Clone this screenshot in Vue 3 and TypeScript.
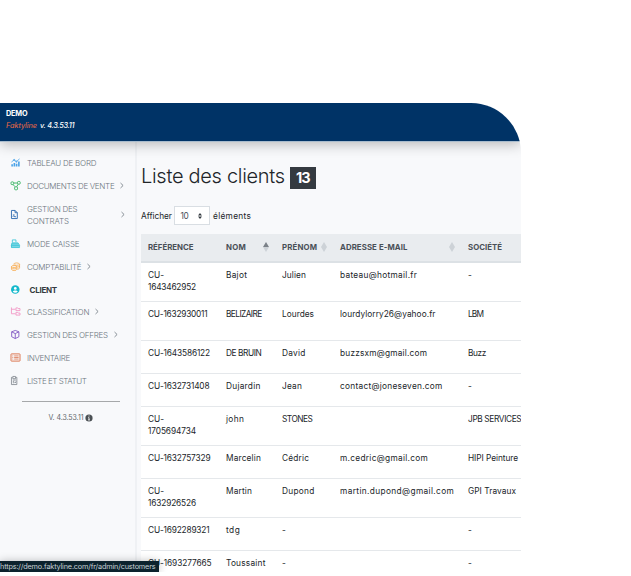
<script setup lang="ts">
interface MenuItem {
  icon: string
  color: string
  lines: [string, number][]
  arrow?: boolean
  wide?: boolean
  active?: boolean
}
type Cell = [string, number]
interface Row {
  height: number
  ref: Cell[]
  cells: Cell[]
}

// Adjusts tracking so that a label takes the given width in pixels.
const vFit = {
  mounted(el: HTMLElement, binding: { value: number }) {
    const n = (el.textContent ?? '').length
    if (n < 2 || !binding.value) return
    const natural = el.getBoundingClientRect().width
    el.style.letterSpacing = `${(binding.value - natural) / (n - 0.5)}px`
  },
}

const menu: MenuItem[] = [
  { icon: 'chart', color: '#4ba3e8', lines: [['TABLEAU DE BORD', 69.5]] },
  { icon: 'nodes', color: '#43b86a', lines: [['DOCUMENTS DE VENTE', 87.5]], arrow: true },
  { icon: 'file', color: '#3b73b5', lines: [['GESTION DES', 50.5], ['CONTRATS', 42]], arrow: true, wide: true },
  { icon: 'register', color: '#35c3d6', lines: [['MODE CAISSE', 52.5]] },
  { icon: 'coins', color: '#f7a94b', lines: [['COMPTABILITÉ', 54.5]], arrow: true },
  { icon: 'user', color: '#13b8cb', lines: [['CLIENT', 27.5]], active: true },
  { icon: 'tree', color: '#f29ac6', lines: [['CLASSIFICATION', 62.5]], arrow: true },
  { icon: 'box', color: '#8258c4', lines: [['GESTION DES OFFRES', 81]], arrow: true },
  { icon: 'list', color: '#dc7550', lines: [['INVENTAIRE', 43]] },
  { icon: 'clip', color: '#7d858c', lines: [['LISTE ET STATUT', 59.5]] },
]

const heads: { label: string; width: number; sort?: string }[] = [
  { label: 'RÉFÉRENCE', width: 45.5 },
  { label: 'NOM', width: 20, sort: 'asc' },
  { label: 'PRÉNOM', width: 35, sort: 'none' },
  { label: 'ADRESSE E-MAIL', width: 67.5, sort: 'none' },
  { label: 'SOCIÉTÉ', width: 34 },
]

const rows: Row[] = [
  { height: 39, ref: [['CU-', 16], ['1643462952', 48]], cells: [['Bajot', 21], ['Julien', 24], ['bateau@hotmail.fr', 77], ['-', 4]] },
  { height: 39, ref: [['CU-1632930011', 59.5]], cells: [['BELIZAIRE', 36], ['Lourdes', 32], ['lourdylorry26@yahoo.fr', 95.5], ['LBM', 15.5]] },
  { height: 33, ref: [['CU-1643586122', 62]], cells: [['DE BRUIN', 35.5], ['David', 23.5], ['buzzsxm@gmail.com', 87], ['Buzz', 18]] },
  { height: 33, ref: [['CU-1632731408', 61.5]], cells: [['Dujardin', 34.5], ['Jean', 20], ['contact@joneseven.com', 102.5], ['-', 4]] },
  { height: 39, ref: [['CU-', 16], ['1705694734', 48]], cells: [['john', 18], ['STONES', 30.5], ['', 0], ['JPB SERVICES', 53.5]] },
  { height: 33, ref: [['CU-1632757329', 62.5]], cells: [['Marcelin', 35], ['Cédric', 27], ['m.cedric@gmail.com', 88], ['HIPI Peinture', 50]] },
  { height: 39, ref: [['CU-', 16], ['1632926526', 48]], cells: [['Martin', 26], ['Dupond', 32.5], ['martin.dupond@gmail.com', 114], ['GPI Travaux', 48]] },
  { height: 33, ref: [['CU-1692289321', 61.5]], cells: [['tdg', 14], ['-', 4], ['', 0], ['-', 4]] },
  { height: 33, ref: [['CU-1693277665', 63.5]], cells: [['Toussaint', 39.5], ['-', 4], ['', 0], ['-', 4]] },
]
</script>

<template>
  <div class="window">
    <header class="topbar">
      <strong><span v-fit="21.5">DEMO</span></strong>
      <em><span v-fit="31" class="brand">Faktyline</span><span v-fit="34.5" class="release">v. 4.3.53.11</span></em>
    </header>

    <div class="body">
      <aside class="sidebar">
        <nav>
          <a v-for="item in menu" :key="item.icon" class="item" :class="{ active: item.active, wide: item.wide }">
            <svg class="icon" viewBox="0 0 20 20" fill="none" stroke="currentColor" stroke-width="1.8" :style="{ color: item.color }">
              <template v-if="item.icon === 'chart'">
                <path d="M2.500 19v-5M7.500 19v-8M12.500 19v-6M17.500 19V8" stroke-width="3.600" />
                <path d="M1 9l6-5 5 4 7-6" />
                <circle cx="7" cy="4.500" r="1.500" /><circle cx="12" cy="8" r="1.500" />
              </template>
              <template v-else-if="item.icon === 'nodes'">
                <g stroke-width="2.200">
                  <rect x="0" y="2" width="6" height="6" rx="2" /><rect x="14.500" y="1" width="6" height="6" rx="2" /><rect x="8" y="13" width="6.500" height="6.500" rx="2" />
                  <path d="M6 4.500h8.500M4.500 8l5 5M16 7l-3.500 6" />
                </g>
              </template>
              <template v-else-if="item.icon === 'file'">
                <path d="M1 1h8l5 5v13H1zM9 1v5h5M4 11h4M4 15c2-3 3-3 4 0h3" stroke-width="2.200" />
              </template>
              <template v-else-if="item.icon === 'register'">
                <path d="M3 8h12l3 6v5H0v-5z" fill="currentColor" opacity=".65" stroke="none" />
                <path d="M3 8V2h8v5M2 9h14l3 5v5H1v-5zM1 14h18" />
              </template>
              <template v-else-if="item.icon === 'coins'">
                <path d="M6 5c0-4 13-4 13 0v8c0 2-3 3-5 3M6 5c0 3 13 3 13 0M19 9c0 2-3 2-5 2" />
                <path d="M1 10c0-3 12-3 12 0v6c0 4-12 4-12 0zM1 10c0 3 12 3 12 0M1 13c0 3 12 3 12 0" />
              </template>
              <template v-else-if="item.icon === 'user'">
                <circle cx="9.500" cy="10" r="9.500" fill="currentColor" stroke="none" />
                <circle cx="9.500" cy="7.500" r="3" fill="#fff" stroke="none" /><path d="M4 15c1-4 10-4 11 0-3 3-8 3-11 0" fill="#fff" stroke="none" />
              </template>
              <template v-else-if="item.icon === 'tree'">
                <path d="M1 1v14h9M1 5h9M11 2h4l1 1.500h4V8h-9zM11 12h4l1 1.500h4V18h-9z" stroke-width="2" />
              </template>
              <template v-else-if="item.icon === 'box'">
                <path d="M9.500 1l8 3v11l-8 4-8-4V4zM1.500 4l8 4 8-4M9.500 8v11" stroke-width="2" />
              </template>
              <template v-else-if="item.icon === 'list'">
                <rect x="0" y="2" width="20" height="16" rx="1" stroke-width="2.200" />
                <path d="M3 6.500h2M7 6.500h10M3 10h2M7 10h10M3 13.500h2M7 13.500h10" />
              </template>
              <template v-else>
                <path d="M3 3H1v16h12V3h-2M4 1h6v5H4zM4 9h7M4 12h3M4 15h3M8 14l1.500 1.500L11 12" />
              </template>
            </svg>
            <span class="label">
              <span v-for="line in item.lines" :key="line[0]" class="line"><span v-fit="line[1]">{{ line[0] }}</span></span>
            </span>
            <svg v-if="item.arrow" class="arrow" viewBox="0 0 4 7"><path d="M.5 1l2.600 2.500L.5 6" fill="none" stroke="currentColor" stroke-width=".8" /></svg>
          </a>
        </nav>
        <div class="version">
          <span v-fit="35">V. 4.3.53.11</span>
          <svg viewBox="0 0 8 8"><circle cx="4" cy="4" r="3.600" fill="#4b5054" /><path d="M4 1.500v1M3.300 3.600H4v2M3 5.900h2" stroke="#f8f9fb" stroke-width=".9" fill="none" /></svg>
        </div>
      </aside>

      <main class="content">
        <h1><span v-fit="144">Liste des clients</span><b class="badge"><span v-fit="14">13</span></b></h1>
        <div class="length">
          <span v-fit="31">Afficher</span>
          <span class="select"><span v-fit="8">10</span><svg viewBox="0 0 4 6"><path d="M0 2.400L2 0l2 2.400zM0 3.600L2 6l2-2.400z" fill="#343a40" /></svg></span>
          <span v-fit="38">éléments</span>
        </div>
        <div class="table">
          <div class="row head">
            <div v-for="h in heads" :key="h.label" class="cell">
              <span v-fit="h.width">{{ h.label }}</span>
              <svg v-if="h.sort" class="sort" viewBox="0 0 6 10">
                <path d="M0 5L3 0l3 5z" :fill="h.sort === 'asc' ? '#7b8188' : '#cdd2d7'" />
                <path d="M0 5L3 10l3-5z" fill="#cdd2d7" />
              </svg>
            </div>
          </div>
          <div v-for="(r, i) in rows" :key="i" class="row" :style="{ height: r.height + 'px' }">
            <div class="cell">
              <div v-for="part in r.ref" :key="part[0]"><span v-fit="part[1]">{{ part[0] }}</span></div>
            </div>
            <div v-for="(c, j) in r.cells" :key="j" class="cell"><span v-fit="c[1]">{{ c[0] }}</span></div>
          </div>
        </div>
      </main>
    </div>
    <div class="status"><span v-fit="155.5">https://demo.faktyline.com/fr/admin/customers</span></div>
  </div>
</template>

<style>
body {
  margin: 0;
  background: #fff;
  overflow: hidden;
}
</style>

<style scoped>
.window {
  position: relative;
  display: flex;
  flex-direction: column;
  box-sizing: border-box;
  width: 521px;
  height: 469px;
  margin-top: 103px;
  overflow: hidden;
  border-top-right-radius: 50px;
  background: #f8f9fb;
  color: #212529;
  font: 400 8.3px/12px Inter, "Liberation Sans", sans-serif;
  white-space: nowrap;
}
.topbar {
  position: relative;
  z-index: 1;
  flex: none;
  box-sizing: border-box;
  height: 38px;
  padding: 5px 6px;
  background: #003366;
  color: #fff;
  font-size: 7.3px;
  box-shadow: 0 1px 0 #a9bccd, 0 3px 14px rgba(0, 0, 0, 0.28);
}
.topbar strong,
.topbar em {
  display: block;
  height: 12px;
}
.brand {
  color: #f26a45;
}
.release {
  margin-left: 3px;
  font-weight: 500;
}
.body {
  display: flex;
  flex: 1;
  min-height: 0;
}
.sidebar {
  flex: none;
  box-sizing: border-box;
  width: 137px;
  padding-top: 11px;
  border-right: 2px solid #eff1f4;
}
.item {
  display: flex;
  align-items: center;
  height: 22.8px;
  padding-left: 11px;
  color: #6c757d;
  font-size: 8px;
  font-weight: 300;
}
.item.wide {
  height: 35px;
}
.item .icon {
  width: 9px;
  height: 9px;
  margin: -1px 7px 0 0;
  overflow: visible;
}
.line {
  display: block;
  height: 12px;
}
.arrow {
  width: 4px;
  height: 7px;
  margin: -1px 0 0 6px;
}
.wide .arrow {
  margin-left: 43.5px;
}
.item.active {
  color: #343a40;
  font-weight: 700;
}
.item.active .label {
  margin-left: 2.5px;
}
.version {
  display: flex;
  justify-content: center;
  align-items: center;
  gap: 2px;
  width: 98px;
  margin: 9px 0 0 22px;
  padding-top: 10px;
  border-top: 1px solid #a6a8aa;
  color: #62676b;
  font-size: 7px;
}
.version svg {
  width: 8px;
  height: 8px;
}
.content {
  flex: 1;
  min-width: 0;
  padding-left: 4px;
}
h1 {
  display: flex;
  align-items: center;
  height: 24px;
  margin: 23px 0 0;
  font-size: 20px;
  line-height: 24px;
  font-weight: 300;
}
.badge {
  width: 26px;
  height: 22px;
  margin: 3px 0 0 5px;
  background: #343a40;
  color: #fff;
  font-size: 14.5px;
  line-height: 22px;
  font-weight: 700;
  text-align: center;
}
.length {
  display: flex;
  align-items: center;
  gap: 2.5px;
  height: 19px;
  margin-top: 18px;
}
.select {
  display: flex;
  align-items: center;
  justify-content: space-between;
  box-sizing: border-box;
  width: 36px;
  height: 19px;
  padding: 0 7px 0 5px;
  border: 1px solid #d9dee3;
  background: #fff;
  color: #495057;
}
.select svg {
  width: 4px;
  height: 6px;
}
.table {
  margin-top: 9px;
  background: #fff;
}
.row {
  display: grid;
  grid-template-columns: 78px 56px 58px 128px 60px;
  box-sizing: border-box;
  border-bottom: 1px solid #e5e8eb;
}
.cell {
  min-width: 0;
  padding: 6px 0 0 7px;
}
.head {
  height: 29px;
  border-bottom: 2px solid #dce1e5;
  background: #e9ecef;
  color: #495057;
  font-size: 7.8px;
  font-weight: 700;
}
.head .cell {
  display: flex;
  align-items: flex-start;
  justify-content: space-between;
  padding: 7px 6.5px 0 7px;
}
.sort {
  flex: none;
  width: 6px;
  height: 10px;
  margin: 1px 0 0;
}
.status {
  position: absolute;
  z-index: 2;
  left: 0;
  bottom: 0;
  width: 159px;
  height: 11px;
  background: #0c222d;
  box-shadow: 0 0 8px rgba(0, 0, 0, 0.25);
  color: #c5d0d6;
  font-size: 7.3px;
  line-height: 12px;
}
</style>
